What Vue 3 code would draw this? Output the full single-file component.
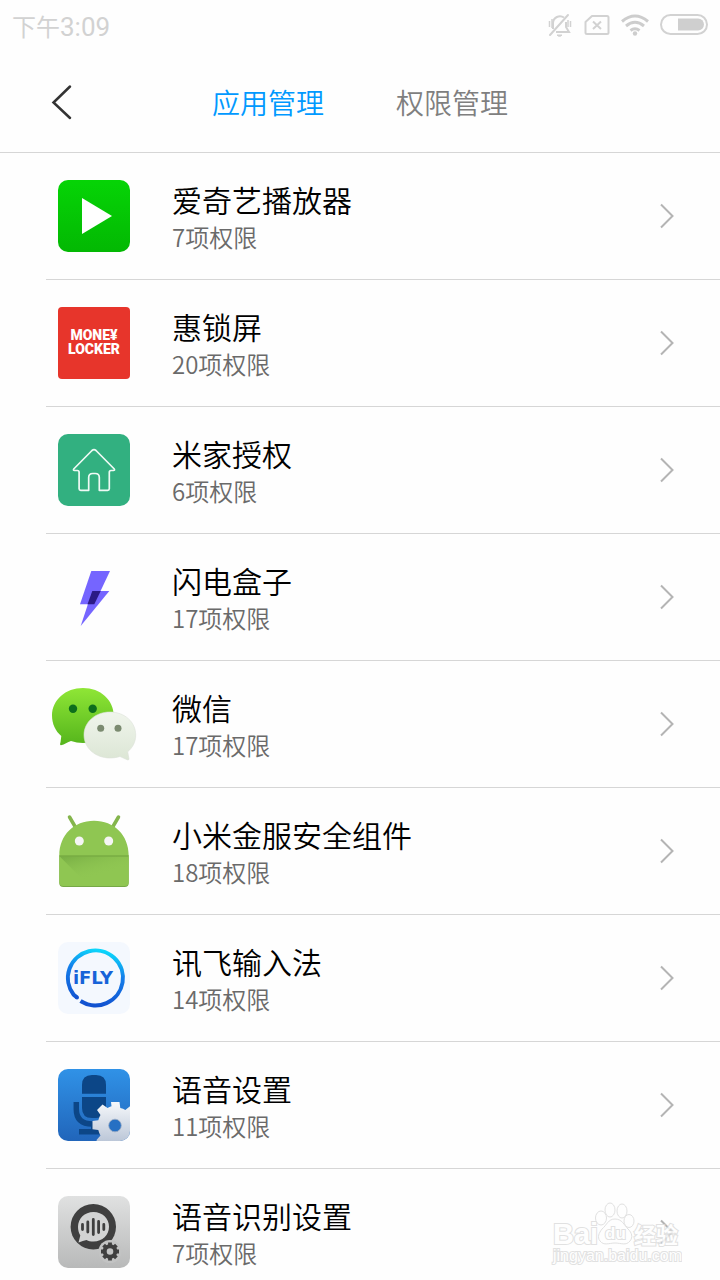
<script setup>
import { ref } from "vue";

const tabs = ["应用管理", "权限管理"];
const activeTab = ref(0);

const apps = [
  { icon: "iqiyi", name: "爱奇艺播放器", count: 7 },
  { icon: "locker", name: "惠锁屏", count: 20 },
  { icon: "mijia", name: "米家授权", count: 6 },
  { icon: "flash", name: "闪电盒子", count: 17 },
  { icon: "wechat", name: "微信", count: 17 },
  { icon: "android", name: "小米金服安全组件", count: 18 },
  { icon: "ifly", name: "讯飞输入法", count: 14 },
  { icon: "voice", name: "语音设置", count: 11 },
  { icon: "speech", name: "语音识别设置", count: 7 },
];
</script>

<template>
  <div class="screen">
    <div class="status">
      <span class="time">下午<span class="digits">3:09</span></span>
      <div class="status-icons">
        <svg width="26" height="26" viewBox="0 0 26 26" fill="none" stroke="#d2d2d2" stroke-width="2">
          <path d="M6 17V11a7 7 0 0 1 11-5.500M19 10v5l3 5H9" />
          <path d="M21 3L3 23" stroke-linecap="round" />
          <path d="M2.500 9v6M23.500 9v6M5 7v9M21 8v7" stroke-width="1.500" />
          <path d="M10 23a3 3 0 0 0 5 0z" fill="#d2d2d2" stroke-width="1" />
        </svg>
        <svg width="26" height="26" viewBox="0 0 26 26" fill="none" stroke="#d2d2d2" stroke-width="2">
          <path d="M8 4h15q1.500 0 1.500 1.500v15q0 1.500-1.500 1.500H3q-1.500 0-1.500-1.500V10z" stroke-linejoin="round" />
          <path d="M9 9.500l8 7.500M17 9.500l-8 7.500" />
        </svg>
        <svg width="28" height="26" viewBox="0 0 28 26" fill="none" stroke="#cdcdcd" stroke-width="3">
          <path d="M1 9.500q13-11 26 0M5 14q9-7.500 18 0M9.500 18.500q4.500-3.500 9 0" />
          <circle cx="14" cy="21.500" r="2.200" fill="#cdcdcd" stroke="none" />
        </svg>
        <svg width="48" height="26" viewBox="0 0 48 26">
          <rect x="1" y="3" width="46" height="19" rx="9.500" fill="none" stroke="#d2d2d2" stroke-width="2" />
          <path d="M18 6.500h20a6 6 0 0 1 0 12H18z" fill="#cfcfcf" />
        </svg>
      </div>
    </div>

    <header class="nav">
      <button class="back" type="button" aria-label="返回">
        <svg width="22" height="36" viewBox="0 0 22 36">
          <path d="M20 2.500L3.500 18.500l16.500 15.500" fill="none" stroke="#333" stroke-width="2.500" stroke-linecap="round" />
        </svg>
      </button>
      <button
        v-for="(tab, i) in tabs"
        :key="tab"
        type="button"
        class="tab"
        :class="{ active: activeTab === i }"
        @click="activeTab = i"
      >
        {{ tab }}
      </button>
    </header>

    <ul class="list">
      <li v-for="app in apps" :key="app.name">
        <a class="row" href="#">
          <svg class="icon" viewBox="0 0 96 96">
            <template v-if="app.icon === 'iqiyi'">
              <linearGradient id="iqiyi" x2="0" y2="1">
                <stop stop-color="#06d406" />
                <stop offset="1" stop-color="#03b803" />
              </linearGradient>
              <rect x="12" y="12" width="72" height="72" rx="10" fill="url(#iqiyi)" />
              <path d="M36 30l30 18-30 18z" fill="#fff" />
            </template>

            <template v-else-if="app.icon === 'locker'">
              <rect x="12" y="12" width="72" height="72" rx="4" fill="#e7352b" />
              <g class="locker-text" text-anchor="middle">
                <text x="48" y="45">MONE¥</text>
                <text x="48" y="59">LOCKER</text>
              </g>
            </template>

            <template v-else-if="app.icon === 'mijia'">
              <rect x="12" y="12" width="72" height="72" rx="10" fill="#32b080" />
              <path
                d="M46 28.500q2-1.700 4 0L68.300 47q.7 1.500-.8 1.500h-2.500q-1.700 0-1.700 1.700v16.500q0 1.600-1.600 1.600h-8.400V55.500q0-4-4-4h-2.600q-4 0-4 4v12.800h-8q-1.600 0-1.600-1.600V50.200q0-1.700-1.700-1.700h-2.900q-1.500 0-.8-1.500z"
                fill="none"
                stroke="#effaf5"
                stroke-width="1.700"
                stroke-linejoin="round"
              />
            </template>

            <template v-else-if="app.icon === 'flash'">
              <path d="M45.300 22H64L48.300 55.300H34z" fill="#7565ff" />
              <path d="M46.300 42h17L34.700 77z" fill="#7565ff" />
              <path d="M46.300 42h8.400l-6.400 13.300h-6.800z" fill="#2b1a85" />
            </template>

            <template v-else-if="app.icon === 'wechat'">
              <linearGradient id="wxGreen" x2="0" y2="1">
                <stop stop-color="#8fe636" />
                <stop offset="1" stop-color="#55b51c" />
              </linearGradient>
              <linearGradient id="wxWhite" x2="0" y2="1">
                <stop stop-color="#f0f5ec" />
                <stop offset="1" stop-color="#dce6d5" />
              </linearGradient>
              <path
                d="M37 12c17.500 0 30.700 12 30.700 27.500S54.500 67 37 67c-4.500 0-8-.8-12-2-3.500 1-6.500 3.500-10 4.200-1.200-.2-1-1.500-.5-3l.8-6.200C9.500 55 6 48 6 39.500 6 24 19.500 12 37 12z"
                fill="url(#wxGreen)"
              />
              <circle cx="27" cy="32.700" r="4.200" fill="#0d6e1d" />
              <circle cx="46.700" cy="32.700" r="4.200" fill="#0d6e1d" />
              <path
                d="M64 36c14.500 0 25.700 10 25.700 23 0 7-3 12.500-8 16.800l1.300 7.200q-.2 1.500-1.800.8L74 80.500c-3.500 1-6.500 1.500-10 1.500-14.500 0-26-10-26-23s11.500-23 26-23z"
                fill="url(#wxWhite)"
                stroke="#dbe0d8"
                stroke-width=".6"
              />
              <circle cx="54.700" cy="52.300" r="3.500" fill="#7b8b70" />
              <circle cx="72" cy="52.300" r="3.500" fill="#7b8b70" />
            </template>

            <template v-else-if="app.icon === 'android'">
              <linearGradient id="droidShade" x1="0" y1="0" x2=".6" y2=".9">
                <stop stop-color="#6fa53f" stop-opacity=".8" />
                <stop offset=".8" stop-color="#8fc652" stop-opacity="0" />
              </linearGradient>
              <path d="M23.500 14l7 12M72.500 14l-7 12" stroke="#84b54c" stroke-width="3.500" stroke-linecap="round" />
              <path d="M13.300 54v26q0 4 4 4h61.400q4 0 4-4V54z" fill="#76a846" />
              <path d="M13.300 52.500C13.300 32 28 17.800 48 17.800S82.700 32 82.700 52.500V79q0 4-4 4H17.300q-4 0-4-4z" fill="#8fc652" />
              <path d="M13.300 53L43 83h39.700V53z" fill="url(#droidShade)" />
              <path d="M13.300 53h69.400" stroke="#79ad43" stroke-width="1.500" />
              <circle cx="33.300" cy="38" r="4.500" fill="#f5f5f5" />
              <circle cx="62.700" cy="38" r="4.500" fill="#f5f5f5" />
            </template>

            <template v-else-if="app.icon === 'ifly'">
              <linearGradient id="ifly" x1=".6" y1="0" x2=".4" y2="1">
                <stop stop-color="#0cd6fb" />
                <stop offset=".4" stop-color="#137dea" />
                <stop offset="1" stop-color="#1251cf" />
              </linearGradient>
              <rect x="12" y="12" width="72" height="72" rx="10" fill="#f4f8fe" />
              <path
                d="M31 67.500l-3.500-3A27.500 27.500 0 1 1 34.500 71"
                fill="none"
                stroke="url(#ifly)"
                stroke-width="4"
              />
              <circle cx="31" cy="67.500" r="2" fill="#1251cf" />
              <text class="ifly-text" x="47" y="54" text-anchor="middle">iFLY</text>
            </template>

            <template v-else-if="app.icon === 'voice'">
              <linearGradient id="voice" x2="0" y2="1">
                <stop stop-color="#3092e7" />
                <stop offset="1" stop-color="#2165ba" />
              </linearGradient>
              <linearGradient id="gear" gradientUnits="userSpaceOnUse" x1="0" y1="46" x2="0" y2="84">
                <stop stop-color="#f5f7fa" />
                <stop offset="1" stop-color="#bcc7d8" />
              </linearGradient>
              <clipPath id="tile"><rect x="12" y="12" width="72" height="72" rx="10" /></clipPath>
              <g clip-path="url(#tile)">
                <rect x="12" y="12" width="72" height="72" fill="url(#voice)" />
                <path d="M36 36.700V28q0-10 10-10h4q10 0 10 10v8.700zM36 40h24v11q0 10-10 10h-4q-10 0-10-10z" fill="#0c4687" />
                <path d="M30.300 45v7q0 15 16 15h4" fill="none" stroke="#0c4687" stroke-width="5.500" />
                <path d="M33 72h28v5.500H33zM45 66h7v8h-7z" fill="#0c4687" />
                <path
                  d="M65 45h8.500l.8 6q3 .7 5 2l5-4 6 6v30H51l-.5-2 4-4.500q-1.500-2.500-2.200-5.500l-5.800-.8V64l5.800-.8q.7-3 2.200-5.200l-3.500-5 5.500-5.500 5 3.500q2-1.300 4-1.800z"
                  fill="url(#gear)"
                />
                <circle cx="69" cy="68.500" r="6.300" fill="#2670c3" stroke="#9cacc4" stroke-width=".8" />
              </g>
            </template>

            <template v-else>
              <linearGradient id="speech" x2="0" y2="1">
                <stop stop-color="#e0e1e1" />
                <stop offset="1" stop-color="#b8b9b9" />
              </linearGradient>
              <rect x="12" y="12" width="72" height="72" rx="10" fill="url(#speech)" />
              <circle cx="47.300" cy="42.700" r="22.700" fill="#3f3f3f" />
              <path
                d="M47.500 28c9 0 15.500 6.500 15.500 14.800S56.500 57.500 47.500 57.500c-3 0-5-.5-7-1.500-2.500.3-4.800 1.500-8 2.500l1.800-7c-1.500-2.500-2.300-5.200-2.300-8.700C32 34.500 38.500 28 47.500 28z"
                fill="#d2d3d3"
              />
              <path
                d="M36.500 40.500v5M41.800 38v10M47.300 35.500v15M52.600 37.500v11M57.800 40.500v5"
                stroke="#3f3f3f"
                stroke-width="2.800"
                stroke-linecap="round"
              />
              <circle cx="64" cy="67.500" r="11.500" fill="#c2c3c3" />
              <circle cx="64" cy="67.500" r="5.300" fill="none" stroke="#3f3f3f" stroke-width="4" />
              <path
                d="M64 58.500v4M64 72.500v4M55 67.500h4M69 67.500h4M57.600 61.100l3 3M67.400 70.900l3 3M70.400 61.100l-3 3M60.600 70.900l-3 3"
                stroke="#3f3f3f"
                stroke-width="3.800"
              />
            </template>
          </svg>
          <span class="info">
            <span class="name">{{ app.name }}</span>
            <span class="count">{{ app.count }}项权限</span>
          </span>
          <svg class="arrow" viewBox="0 0 16 26">
            <path d="M2 1.500L13.500 13 2 24.500" fill="none" stroke="#b4b4b4" stroke-width="2" />
          </svg>
        </a>
      </li>
    </ul>

    <svg class="watermark" viewBox="0 0 132 68" fill="#fff" stroke="#dadada">
      <text class="wm-big" x="3" y="42">Bai</text>
      <ellipse cx="51" cy="16" rx="5.500" ry="7" />
      <ellipse cx="60" cy="8" rx="5" ry="7" />
      <ellipse cx="72" cy="9" rx="5" ry="7" />
      <ellipse cx="79" cy="19" rx="5" ry="6.500" />
      <path d="M65 17c7 0 9 6 13 10s5 8 2 12c-4 5-9 2-15 2s-11 3-15-2c-3-4-1-8 2-12 5-4 6-10 13-10z" />
      <text class="wm-du" x="55" y="37">du</text>
      <text class="wm-cn" x="84" y="41">经验</text>
      <text class="wm-url" x="3" y="59">jingyan.baidu.com</text>
    </svg>
  </div>
</template>

<style>
body {
  margin: 0;
  background: #fefefe;
}
</style>

<style scoped>
.screen {
  position: relative;
  display: flex;
  flex-direction: column;
  height: 100vh;
  overflow: hidden;
  background: #fefefe;
  font-family: "Noto Sans CJK SC", sans-serif;
  font-weight: 350;
}
.status {
  display: flex;
  flex: none;
  align-items: center;
  justify-content: space-between;
  height: 50px;
  padding: 0 12px;
}
.time {
  color: #d2d2d2;
  font-size: 24px;
  font-weight: 400;
}
.digits {
  font-family: Roboto, sans-serif;
  font-size: 26px;
}
.status-icons {
  display: flex;
  gap: 11px;
}
.nav {
  position: relative;
  display: flex;
  flex: none;
  justify-content: center;
  gap: 72px;
  height: 102px;
  border-bottom: 1px solid #d6d6d6;
}
button {
  padding: 0;
  border: 0;
  background: none;
  font: inherit;
}
.back {
  position: absolute;
  left: 50px;
  top: 0;
  height: 104px;
}
.back svg {
  display: block;
}
.tab {
  padding-top: 2px;
  color: #7f7f7f;
  font-size: 28px;
}
.tab.active {
  color: #0099ff;
}
.list {
  flex: 1;
  min-height: 0;
  margin: 0;
  padding: 0 0 0 46px;
  overflow: hidden;
  list-style: none;
}
.row {
  display: flex;
  align-items: center;
  height: 126px;
  padding-right: 45px;
  border-bottom: 1px solid #d6d6d6;
  color: #000;
  text-decoration: none;
}
.icon {
  flex: none;
  width: 96px;
  height: 96px;
  margin-right: 30px;
}
.info {
  display: flex;
  flex: 1;
  flex-direction: column;
}
.name {
  font-size: 30px;
  line-height: 42px;
}
.count {
  color: #6a6a6a;
  font-size: 24px;
  line-height: 34px;
}
.arrow {
  flex: none;
  width: 16px;
  height: 26px;
}
.locker-text {
  fill: #fff;
  font: 900 14px "Liberation Sans Narrow", Roboto, sans-serif;
}
.ifly-text {
  fill: #1763d8;
  font: bold 18px "DejaVu Sans", sans-serif;
}
.watermark {
  position: absolute;
  right: 38px;
  bottom: 10px;
  width: 132px;
  height: 68px;
  opacity: 0.8;
}
.watermark text {
  paint-order: stroke;
  stroke-width: 2px;
}
.wm-big {
  font: bold 29px "Liberation Sans", sans-serif;
}
.wm-du {
  font: bold 17px "Liberation Sans", sans-serif;
}
.wm-cn {
  font: bold 22px "Noto Sans CJK SC", sans-serif;
}
.wm-url {
  font: 16px "Liberation Sans", sans-serif;
}
</style>
